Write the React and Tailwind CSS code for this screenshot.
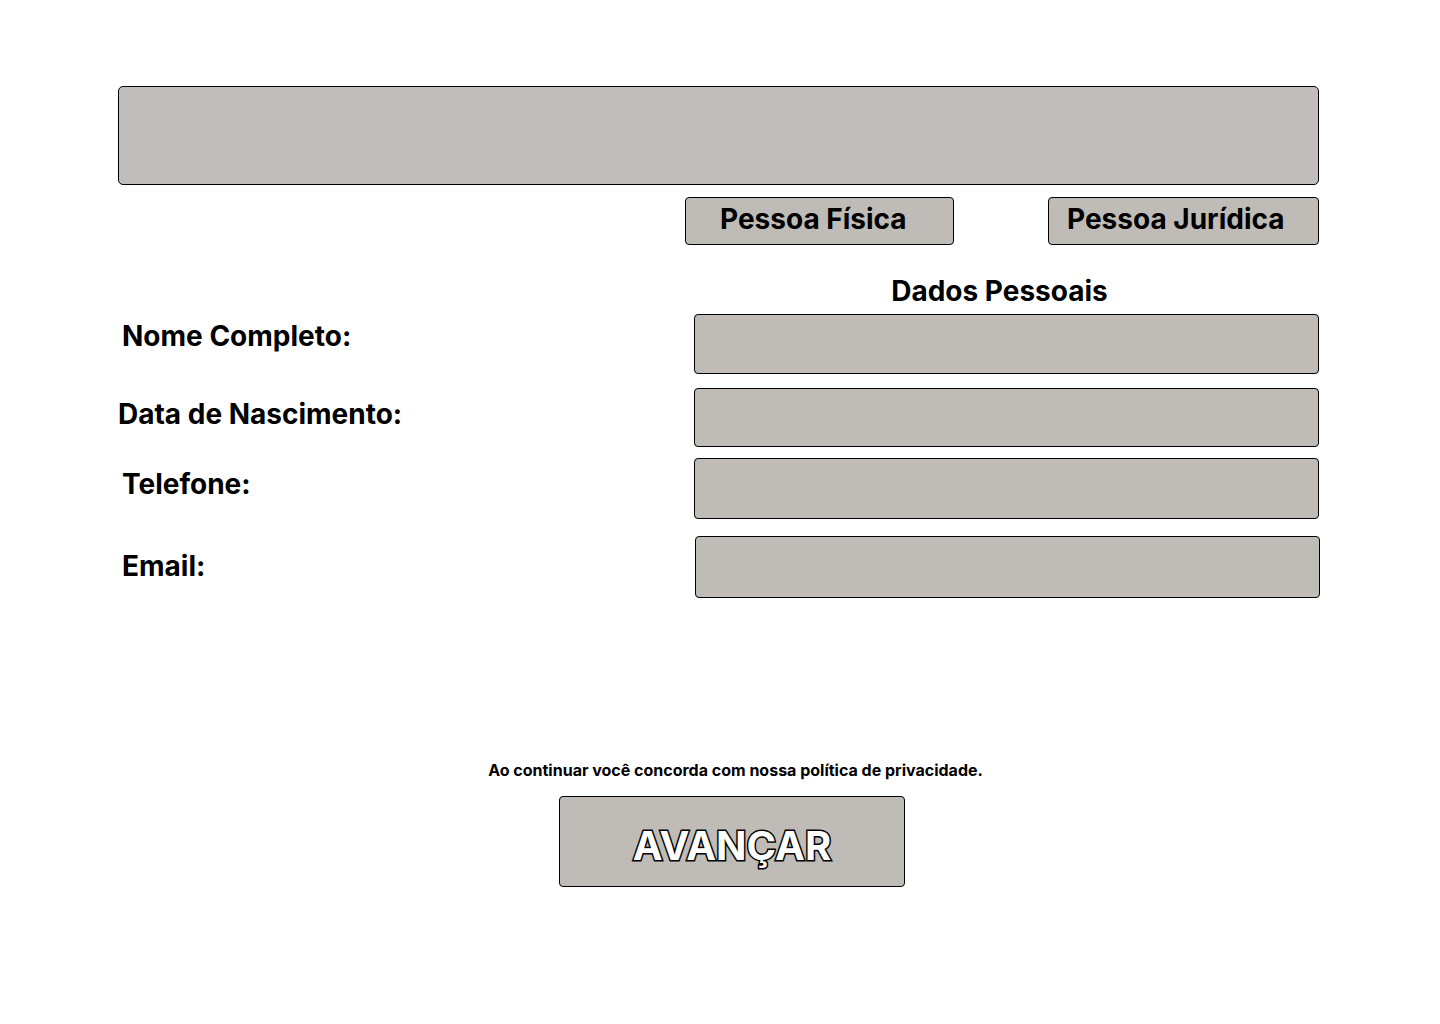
import React from "react";

const fields = [
  { label: "Nome Completo:", rowClass: "mt-[6px]", labelClass: "pl-[4px] pt-[5px]", boxClass: "h-[60px]" },
  { label: "Data de Nascimento:", rowClass: "mt-[14px]", labelClass: "pt-[9px]", boxClass: "h-[59px]" },
  { label: "Telefone:", rowClass: "mt-[11px]", labelClass: "pl-[4px] pt-[9px]", boxClass: "h-[61px]" },
  { label: "Email:", rowClass: "mt-[17px]", labelClass: "pl-[4px] pt-[13px]", boxClass: "h-[62px] translate-x-[1px]" },
];

const App = () => {
  return (
    <div className="min-h-screen bg-white font-['Inter','Liberation_Sans',sans-serif] text-black">
      <div className="ml-[118px] w-[1201px] pt-[86px]">
        <div className="h-[99px] rounded-[5px] border border-black bg-[#c1bdbc]" />

        <div className="mt-[12px] flex">
          <button
            type="button"
            className="ml-[567px] h-[48px] w-[269px] rounded-[4px] border border-black bg-[#bfbbb6] pb-[4px] pl-[34px] text-left text-[28px] font-bold leading-none"
          >
            Pessoa Física
          </button>
          <button
            type="button"
            className="ml-auto h-[48px] w-[271px] rounded-[4px] border border-black bg-[#bfbbb6] pb-[4px] pl-[18px] text-left text-[28px] font-bold leading-none"
          >
            Pessoa Jurídica
          </button>
        </div>

        <div className="mt-[29px] flex">
          <div className="w-[576px]" />
          <h2 className="flex-1 pr-[14px] text-center text-[28px] font-bold leading-[34px]">
            Dados Pessoais
          </h2>
        </div>

        {fields.map((f) => (
          <div key={f.label} className={`flex items-start ${f.rowClass}`}>
            <label className={`w-[576px] shrink-0 text-[28px] font-bold leading-[34px] ${f.labelClass}`}>
              {f.label}
            </label>
            <div className={`flex-1 rounded-[4px] border border-black bg-[#bfbbb6] ${f.boxClass}`} />
          </div>
        ))}
      </div>

      <div className="mt-[162px] flex flex-col items-center">
        <p className="ml-[31px] text-[16px] font-bold leading-[20px]">
          Ao continuar você concorda com nossa política de privacidade.
        </p>
        <button
          type="button"
          className="ml-[24px] mt-[16px] h-[91px] w-[346px] rounded-[4px] border border-black bg-[#bfbbb6] pt-[8px] text-[40px] font-bold text-white [-webkit-text-stroke:3px_#000] [paint-order:stroke_fill]"
        >
          AVANÇAR
        </button>
      </div>
    </div>
  );
};

export default App;
